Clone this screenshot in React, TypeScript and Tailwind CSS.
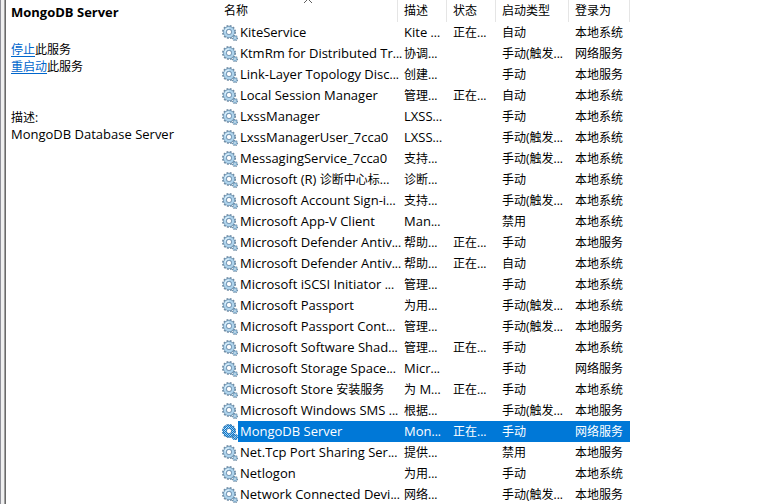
import React from "react";

type Service = {
  name: string;
  desc: string;
  running?: boolean;
  start: string;
  logon: string;
  selected?: boolean;
};

const SYS = "本地系统";
const LOC = "本地服务";
const NET = "网络服务";
const AUTO = "自动";
const MAN = "手动";
const TRIG = "手动(触发...";
const OFF = "禁用";

const services: Service[] = [
  { name: "KiteService", desc: "Kite ...", running: true, start: AUTO, logon: SYS },
  { name: "KtmRm for Distributed Tr...", desc: "协调...", start: TRIG, logon: NET },
  { name: "Link-Layer Topology Disc...", desc: "创建...", start: MAN, logon: LOC },
  { name: "Local Session Manager", desc: "管理...", running: true, start: AUTO, logon: SYS },
  { name: "LxssManager", desc: "LXSS...", start: MAN, logon: SYS },
  { name: "LxssManagerUser_7cca0", desc: "LXSS...", start: TRIG, logon: SYS },
  { name: "MessagingService_7cca0", desc: "支持...", start: TRIG, logon: SYS },
  { name: "Microsoft (R) 诊断中心标...", desc: "诊断...", start: MAN, logon: SYS },
  { name: "Microsoft Account Sign-i...", desc: "支持...", start: TRIG, logon: SYS },
  { name: "Microsoft App-V Client", desc: "Man...", start: OFF, logon: SYS },
  { name: "Microsoft Defender Antiv...", desc: "帮助...", running: true, start: MAN, logon: LOC },
  { name: "Microsoft Defender Antiv...", desc: "帮助...", running: true, start: AUTO, logon: SYS },
  { name: "Microsoft iSCSI Initiator ...", desc: "管理...", start: MAN, logon: SYS },
  { name: "Microsoft Passport", desc: "为用...", start: TRIG, logon: SYS },
  { name: "Microsoft Passport Cont...", desc: "管理...", start: TRIG, logon: LOC },
  { name: "Microsoft Software Shad...", desc: "管理...", running: true, start: MAN, logon: SYS },
  { name: "Microsoft Storage Space...", desc: "Micr...", start: MAN, logon: NET },
  { name: "Microsoft Store 安装服务", desc: "为 M...", running: true, start: MAN, logon: SYS },
  { name: "Microsoft Windows SMS ...", desc: "根据...", start: TRIG, logon: LOC },
  { name: "MongoDB Server", desc: "Mon...", running: true, start: MAN, logon: NET, selected: true },
  { name: "Net.Tcp Port Sharing Ser...", desc: "提供...", start: OFF, logon: LOC },
  { name: "Netlogon", desc: "为用...", start: MAN, logon: SYS },
  { name: "Network Connected Devi...", desc: "网络...", start: TRIG, logon: LOC },
];

// Latin words are set one pixel larger than the Chinese text and the dots around them.
function Label({ text }: { text: string }) {
  const runs = text.match(/[\u4e00-\u9fff]+|\.{3}|(?:(?!\.{3})[^\u4e00-\u9fff])+/g) ?? [];
  return (
    <>
      {runs.map((run, i) =>
        /[A-Za-z]/.test(run) ? (
          <span key={i} className="text-[13px]">
            {run}
          </span>
        ) : (
          <span key={i}>{run}</span>
        ),
      )}
    </>
  );
}

function GearIcon({ selected }: { selected?: boolean }) {
  return (
    <svg width="16" height="16" viewBox="0 0 16 16" aria-hidden="true" className="block">
      <circle cx="7" cy="7" r="6" fill="none" stroke="#6f8ba3" strokeWidth="2" strokeDasharray="1.8 1.34" />
      <circle cx="7" cy="7" r="4.2" fill="#fff" stroke="#7499b6" strokeWidth="3.4" />
      <circle cx="7" cy="7" r="4.1" fill="none" stroke="#aed3ec" strokeWidth="2.3" />
      <path d="M3.1 6.4A4 4 0 0 1 7 3" fill="none" stroke="#def1fb" strokeWidth="1.2" />
      <circle cx="7" cy="7" r="2.6" fill="#fff" stroke="#5f87a8" strokeWidth=".8" />
      <circle cx="13" cy="13" r="2.4" fill="none" stroke="#6f8ba3" strokeWidth="1.4" strokeDasharray="1.1 .78" />
      <circle cx="13" cy="13" r="1.5" fill="#fff" stroke="#86b2d1" strokeWidth="1.4" />
      {selected && (
        <>
          <defs>
            <pattern id="selection-dots" width="2" height="2" patternUnits="userSpaceOnUse">
              <path d="M0 0h1v1H0zM1 1h1v1H1z" fill="#0078d7" />
            </pattern>
          </defs>
          <circle cx="7" cy="7" r="4.6" fill="none" stroke="url(#selection-dots)" strokeWidth="4.4" />
          <circle cx="13" cy="13" r="1.8" fill="none" stroke="url(#selection-dots)" strokeWidth="2.4" />
        </>
      )}
    </svg>
  );
}

const head = "relative border-r border-[#e5e5e5] p-0 pb-px pl-1.5 text-left font-normal";

export default function App() {
  return (
    <div className="flex h-screen overflow-hidden bg-white font-['Open_Sans','Noto_Sans_CJK_SC',sans-serif] text-xs text-black">
      <div className="flex w-1.5 shrink-0 border-x border-l-[#8e8f98] border-r-[#696969] bg-[#f0f0f0]">
        <div className="ml-auto w-px bg-[#a0a0a0]" />
      </div>
      <aside className="w-53 shrink-0 pl-[5px] pt-1 leading-[17px]">
        <h1 className="text-[13px] font-bold">MongoDB Server</h1>
        <p className="mt-5">
          <a href="#stop" className="text-[#0066cc] underline underline-offset-2">停止</a>此服务
        </p>
        <p>
          <a href="#restart" className="text-[#0066cc] underline underline-offset-2">重启动</a>此服务
        </p>
        <p className="mt-[34px]">描述:</p>
        <p className="text-[13px]">MongoDB Database Server</p>
      </aside>
      <main className="min-w-0 flex-1">
        <table className="w-[412px] table-fixed border-separate border-spacing-0 whitespace-nowrap leading-5">
          <colgroup>
            <col className="w-5" />
            <col className="w-40" />
            <col className="w-[49px]" />
            <col className="w-[49px]" />
            <col className="w-[73px]" />
            <col className="w-[61px]" />
          </colgroup>
          <thead>
            <tr className="h-[22px]">
              <th colSpan={2} className={head}>
                名称
                <svg width="9" height="4" viewBox="0 0 9 4" aria-hidden="true" className="absolute -top-px left-1/2 -translate-x-1/2">
                  <path d="M.5 4 4.5 0l4 4" fill="none" stroke="#606060" />
                </svg>
              </th>
              <th className={head}>描述</th>
              <th className={head}>状态</th>
              <th className={head}>启动类型</th>
              <th className={head}>登录为</th>
            </tr>
          </thead>
          <tbody>
            {services.map((s, i) => {
              const cell = s.selected
                ? "bg-[#0078d7] p-0 pl-1.5 text-white"
                : "p-0 pl-1.5";
              const nameCell = s.selected
                ? "bg-[#0078d7] p-0 pl-0.5 text-white"
                : "p-0 pl-0.5";
              return (
                <tr key={i} className="h-[21px]">
                  <td className="p-0 pl-1">
                    <GearIcon selected={s.selected} />
                  </td>
                  <td className={nameCell}><Label text={s.name} /></td>
                  <td className={cell}><Label text={s.desc} /></td>
                  <td className={cell}>{s.running ? "正在..." : ""}</td>
                  <td className={cell}>{s.start}</td>
                  <td className={cell}>{s.logon}</td>
                </tr>
              );
            })}
          </tbody>
        </table>
      </main>
    </div>
  );
}
